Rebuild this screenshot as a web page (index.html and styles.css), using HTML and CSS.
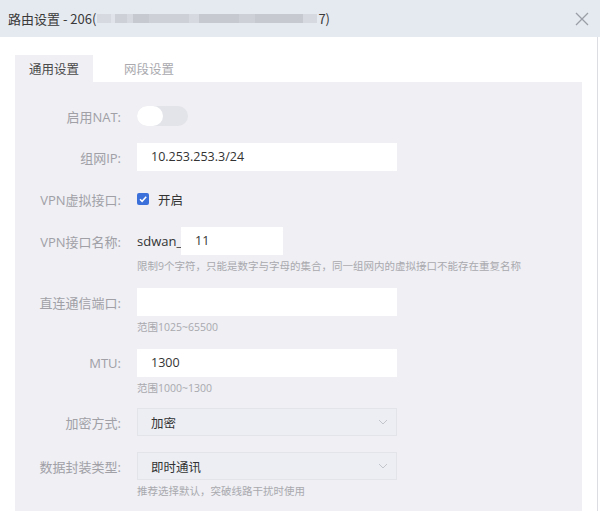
FILE: index.html
```html
<!DOCTYPE html>
<html lang="zh-CN">
<head>
<meta charset="utf-8">
<link rel="stylesheet" href="styles.css">
</head>
<body>
<div class="dialog">
  <div class="header">
    <div class="title">
      <span>路由设置 - 206(</span>
      <span class="blur">
        <i class="b1 w14"></i><i class="b0 w4"></i><i class="b2 w12"></i><i class="b1 w6"></i><i class="b3 w16"></i><i class="b2 w40"></i><i class="b1 w10"></i><i class="b3 w40"></i><i class="b2 w16"></i><i class="b3 w48"></i><i class="b1 w14"></i>
      </span>
      <span>7)</span>
    </div>
    <svg class="close" width="14" height="14" viewBox="0 0 14 14"><path d="M1 1L13 13M13 1L1 13" stroke="#9a9ea6" stroke-width="1.3" fill="none"/></svg>
  </div>
  <div class="body">
    <div class="tabs">
      <div class="tab active">通用设置</div>
      <div class="tab">网段设置</div>
    </div>
    <div class="panel">
      <div class="item">
        <div class="row">
          <label class="label">启用NAT:</label>
          <div class="switch"><span class="knob"></span></div>
        </div>
      </div>
      <div class="item">
        <div class="row">
          <label class="label">组网IP:</label>
          <div class="input">10.253.253.3/24</div>
        </div>
      </div>
      <div class="item">
        <div class="row check-row">
          <label class="label">VPN虚拟接口:</label>
          <span class="checkbox"><svg width="12" height="12" viewBox="0 0 12 12"><path d="M3 6.2L5.1 8.3L9.2 3.8" stroke="#fff" stroke-width="1.5" fill="none"/></svg></span>
          <span class="check-text">开启</span>
        </div>
      </div>
      <div class="item">
        <div class="row">
          <label class="label">VPN接口名称:</label>
          <span class="prefix">sdwan_</span>
          <div class="input short">11</div>
        </div>
        <div class="hint">限制9个字符，只能是数字与字母的集合，同一组网内的虚拟接口不能存在重复名称</div>
      </div>
      <div class="item">
        <div class="row">
          <label class="label">直连通信端口:</label>
          <div class="input"></div>
        </div>
        <div class="hint">范围1025~65500</div>
      </div>
      <div class="item">
        <div class="row">
          <label class="label">MTU:</label>
          <div class="input">1300</div>
        </div>
        <div class="hint">范围1000~1300</div>
      </div>
      <div class="item item-tight">
        <div class="row">
          <label class="label">加密方式:</label>
          <div class="select"><span>加密</span><svg width="10" height="6" viewBox="0 0 10 6"><path d="M1 1L5 5L9 1" stroke="#c2c5cc" stroke-width="1" fill="none"/></svg></div>
        </div>
      </div>
      <div class="item">
        <div class="row">
          <label class="label">数据封装类型:</label>
          <div class="select"><span>即时通讯</span><svg width="10" height="6" viewBox="0 0 10 6"><path d="M1 1L5 5L9 1" stroke="#c2c5cc" stroke-width="1" fill="none"/></svg></div>
        </div>
        <div class="hint">推荐选择默认，突破线路干扰时使用</div>
      </div>
    </div>
  </div>
</div>
</body>
</html>
```
FILE: styles.css
```css
* { box-sizing: border-box; }
html, body { margin: 0; padding: 0; }
body {
  width: 600px;
  height: 511px;
  overflow: hidden;
  background: #fff;
  font-family: "Open Sans", "Noto Sans CJK SC", sans-serif;
  color: #333;
}
.dialog {
  width: 600px;
  height: 511px;
  display: flex;
  flex-direction: column;
  overflow: hidden;
}
.header {
  height: 37px;
  background: #e5e9f0;
  display: flex;
  align-items: center;
  justify-content: space-between;
  padding: 0 11px 0 8px;
  flex-shrink: 0;
}
.title {
  display: flex;
  align-items: center;
  font-size: 13px;
  color: #3a3a3a;
  white-space: pre;
  font-family: "Noto Sans CJK SC", sans-serif;
}
.blur { display: flex; align-items: center; height: 10px; margin: 0 1px; }
.blur i { display: block; height: 9px; width: 12px; }
.blur .b0 { background: #e0e3e9; }
.blur .b1 { background: #d6d9df; }
.blur .b2 { background: #cdd0d7; }
.blur .b3 { background: #c6c9d0; }
.blur .w4 { width: 4px; }
.blur .w6 { width: 6px; }
.blur .w10 { width: 10px; }
.blur .w12 { width: 12px; }
.blur .w14 { width: 14px; }
.blur .w16 { width: 16px; }
.blur .w40 { width: 40px; }
.blur .w48 { width: 48px; }
.close { display: block; }
.body {
  flex: 1;
  min-height: 0;
  padding: 18px 15px 0 15px;
  border-right: 1px solid #dcdde2;
  margin-right: 2px;
  display: flex;
  flex-direction: column;
}
.tabs { display: flex; height: 27px; flex-shrink: 0; }
.tab {
  width: 78px;
  font-size: 12.5px;
  line-height: 27px;
  text-align: center;
  color: #a9a9ae;
  font-family: "Noto Sans CJK SC", sans-serif;
}
.tab.active { background: #efeff4; color: #4a4a4a; }
.tab + .tab { margin-left: 24px; width: 64px; }
.panel {
  background: #efeff4;
  flex: 1;
  padding-top: 21px;
  display: flex;
  flex-direction: column;
  gap: 14px;
}
.item-tight { margin-top: -2px; margin-bottom: 2px; }
.row { display: flex; align-items: center; min-height: 26px; }
.check-row { min-height: 28px; }
.label {
  width: 106px;
  text-align: right;
  font-size: 13px;
  color: #a0a0a6;
  margin-right: 16px;
  white-space: nowrap;
}
.switch {
  width: 51px;
  height: 20px;
  border-radius: 10px;
  background: #e3e4e9;
  position: relative;
}
.knob {
  position: absolute;
  left: 0;
  top: 0;
  width: 26px;
  height: 20px;
  border-radius: 10px;
  background: #fff;
}
.input {
  width: 260px;
  height: 28px;
  background: #fff;
  font-size: 12.5px;
  line-height: 28px;
  padding-left: 14px;
  color: #333;
}
.input.short { width: 102px; }
.prefix { font-size: 13px; color: #333; width: 44px; }
.checkbox {
  width: 12px;
  height: 12px;
  border-radius: 2px;
  background: #3b6fd9;
  display: flex;
}
.check-text { font-size: 12.5px; margin-left: 9px; color: #333; }
.hint {
  margin-top: 3px;
  margin-left: 122px;
  font-size: 10.5px;
  line-height: 16px;
  color: #a9a9ae;
  white-space: nowrap;
}
.select {
  width: 260px;
  height: 28px;
  background: #eceef3;
  border: 1px solid #e2e4ea;
  display: flex;
  align-items: center;
  justify-content: space-between;
  padding: 0 8px 0 13px;
  font-size: 12.5px;
  color: #333;
}
```
